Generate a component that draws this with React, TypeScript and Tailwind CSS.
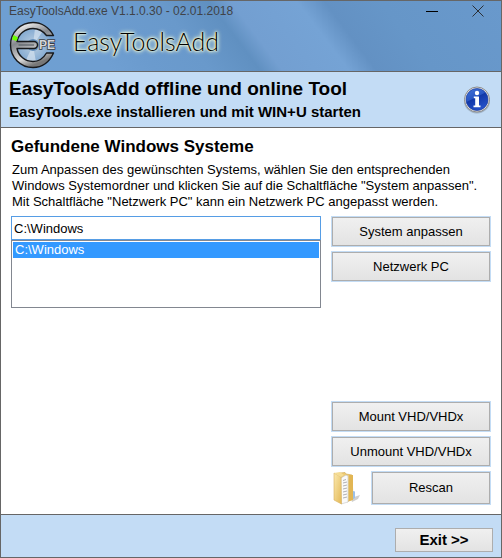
import React, { useState } from 'react';

const systems = ['C:\\Windows'];

const LogoIcon = () => (
  <svg className="h-[48px] w-[48px] shrink-0" viewBox="0 0 48 48" aria-hidden="true">
    <defs>
      <linearGradient id="metal" x1="0" y1="0" x2="0.4" y2="1">
        <stop offset="0" stopColor="#8d8d8d" />
        <stop offset="0.18" stopColor="#e2e2e2" />
        <stop offset="0.45" stopColor="#85888d" />
        <stop offset="0.8" stopColor="#dadada" />
        <stop offset="1" stopColor="#777" />
      </linearGradient>
      <radialGradient id="disc">
        <stop offset="0" stopColor="#6d9bc8" />
        <stop offset="0.3" stopColor="#a9c3dc" />
        <stop offset="1" stopColor="#7fa7d0" />
      </radialGradient>
    </defs>
    <circle cx="24" cy="24" r="18" fill="url(#disc)" />
    <path d="M24 24 L17 39 A17 17 0 0 0 27 41 Z M24 24 L26 7 A17 17 0 0 1 34 10 Z" fill="#d5e3ef" opacity="0.7" />
    <circle cx="24" cy="24" r="6" fill="#638fbd" />
    <path
      d="M44.500 14.500 C40 6 32 1.500 24 1.500 A22.500 22.500 0 0 0 24 46.500 C33 46.500 40 42 44.500 32 L37.500 32 C34 38 29 40.500 24 40.500 C16 40.500 9.500 35 8 27.500 L25 27.500 A3.500 3.500 0 0 0 25 20.500 L8 20.500 C9.500 13 16 7.500 24 7.500 C29 7.500 34 10 37.500 14.500 Z"
      fill="url(#metal)"
      stroke="#17191c"
      strokeWidth="1.400"
      strokeLinejoin="round"
    />
    <path d="M9.500 24 H25" stroke="#5a6067" strokeWidth="1.200" />
    <path d="M4.500 14 L9 16.500 L7.500 20 L3 18.500 Z" fill="#6cff00" />
    <text
      x="30"
      y="28"
      fontSize="12"
      fontWeight="700"
      fontFamily="Liberation Sans, sans-serif"
      fill="#d4d6d9"
      stroke="#383c42"
      strokeWidth="1.600"
      paintOrder="stroke"
    >
      PE
    </text>
  </svg>
);

const InfoIcon = () => (
  <svg className="h-[28px] w-[28px]" viewBox="0 0 28 28" aria-hidden="true">
    <defs>
      <linearGradient id="info" x1="0" y1="0" x2="0.5" y2="1">
        <stop offset="0" stopColor="#4474d8" />
        <stop offset="0.48" stopColor="#2856c4" />
        <stop offset="0.52" stopColor="#1238a8" />
        <stop offset="1" stopColor="#2450c8" />
      </linearGradient>
    </defs>
    <ellipse cx="14" cy="15" rx="13" ry="12.500" fill="#7c8796" opacity="0.5" />
    <circle cx="14" cy="13.500" r="12.500" fill="#e8e8e8" stroke="#8c8c8c" />
    <circle cx="14" cy="13.500" r="11" fill="url(#info)" stroke="#1d3f9d" strokeWidth="0.700" />
    <circle cx="14" cy="7" r="2.200" fill="#fff" />
    <path d="M10.800 10.500 H16 V19.500 H17.500 V21.300 H10.500 V19.500 H12.200 V12.300 H10.800 Z" fill="#fff" />
  </svg>
);

const FolderIcon = () => (
  <svg className="h-[34px] w-[30px]" viewBox="0 0 30 34" aria-hidden="true">
    <defs>
      <linearGradient id="folder" x1="0" y1="0" x2="1" y2="1">
        <stop offset="0" stopColor="#fbe9ae" />
        <stop offset="1" stopColor="#e3b856" />
      </linearGradient>
    </defs>
    <path d="M19 27 L28 24 L26 28 L20 31 Z" fill="#c4c4c4" opacity="0.8" />
    <path d="M8 2 L13 1.500 L14 3 L20 4 L21 28 L15 31 Z" fill="#edca72" stroke="#cfa549" strokeWidth="0.600" />
    <path d="M17 4 L21 4 V29 L17 30 Z" fill="#e2b654" />
    <path d="M21 20 L23 20.500 V27 L21 28 Z" fill="#9cc0e6" />
    <path d="M9 7 L14 4 L16 5 V31 L9 33 Z" fill="#fafafa" stroke="#c4c4c4" strokeWidth="0.600" />
    <path d="M11 9.500 L14 8.500 M11 12 L15 11 M11 15 L15 14 M11 18 L15 17 M11 21 L15 20 M11 24 L15 23 M11 27 L15 26" stroke="#b0b0b5" />
    <path d="M2 2 L9 6 L9.500 33 L2 29 Z" fill="url(#folder)" stroke="#d8b05a" strokeWidth="0.600" />
    <path d="M2 2 L8 1 L12 4 L9 6 Z" fill="#f5dc93" />
  </svg>
);

interface ActionButtonProps {
  label: string;
  className?: string;
}

const ActionButton: React.FC<ActionButtonProps> = ({ label, className = 'h-[31px] w-full' }) => (
  <button
    type="button"
    className={`${className} border border-[#c3dcf5] bg-[#adadad] p-px text-[13px] hover:border-[#3399ff]`}
  >
    <span className="flex h-full items-center justify-center bg-linear-to-b from-[#f0f0f0] to-[#e3e3e3]">{label}</span>
  </button>
);

export default function App() {
  const [selected, setSelected] = useState(systems[0]);

  return (
    <div className="flex min-h-screen flex-col border border-[#666] bg-white font-['Liberation_Sans',Arial,sans-serif] text-black">
      <header className="flex h-[71px] flex-col border-b border-[#666] bg-[linear-gradient(53deg,#6e9fd2_0%,#6f9fd2_20%,#6b9bce_28%,#6999cb_38%,#6090c1_47%,#739fd1_51%,#75a3d5_63%,#6391c3_68%,#6696c8_78%,#6999cc_100%)]">
        <div className="flex h-[20px] items-center justify-between pl-2">
          <span className="text-[12px] text-[#404348]">EasyToolsAdd.exe V1.1.0.30 - 02.01.2018</span>
          <div className="flex">
            <button type="button" aria-label="Minimieren" className="flex h-[20px] w-[46px] items-center justify-center">
              <svg className="h-3 w-3" viewBox="0 0 12 12">
                <path d="M0 6.500 H12" stroke="#000" />
              </svg>
            </button>
            <button type="button" aria-label="Schließen" className="flex h-[20px] w-[46px] items-center justify-center">
              <svg className="h-3 w-3" viewBox="0 0 12 12">
                <path d="M0.500 0.500 L11.500 11.500 M11.500 0.500 L0.500 11.500" stroke="#2b2f35" />
              </svg>
            </button>
          </div>
        </div>
        <div className="flex items-start gap-4 pl-2">
          <LogoIcon />
          <span className="font-['Lato'] text-[25px] leading-[40px] font-light [text-shadow:0_0_1px_#f4fbd8,0_0_2px_#f4fbd8,0_0_3px_#f4fbd8,0_0_4px_#f4fbd8,0_0_5px_#e6f2d0]">
            EasyToolsAdd
          </span>
        </div>
      </header>

      <section className="flex items-center justify-between border-b border-[#666] bg-[#c3dcf5] py-[5px] pr-[10px] pl-2">
        <div className="font-bold">
          <h1 className="text-[19px] leading-[24px]">EasyToolsAdd offline und online Tool</h1>
          <p className="text-[15px] leading-[21px]">EasyTools.exe installieren und mit WIN+U starten</p>
        </div>
        <button type="button" aria-label="Info">
          <InfoIcon />
        </button>
      </section>

      <main className="flex flex-1 flex-col px-[10px] pt-2">
        <h2 className="text-[17px] leading-[22px] font-bold">Gefundene Windows Systeme</h2>
        <p className="mt-1 pl-px text-[13px] leading-[16px]">
          Zum Anpassen des gewünschten Systems, wählen Sie den entsprechenden
          <br />
          Windows Systemordner und klicken Sie auf die Schaltfläche "System anpassen".
          <br />
          Mit Schaltfläche "Netzwerk PC" kann ein Netzwerk PC angepasst werden.
        </p>

        <div className="mt-[6px] flex flex-1 gap-[10px]">
          <div className="flex-1 text-[13px]">
            <input
              type="text"
              aria-label="Windows Systemordner"
              value={selected}
              onChange={(e) => setSelected(e.target.value)}
              className="block h-[24px] w-full border border-[#569de5] px-[2px] outline-none"
            />
            <ul aria-label="Gefundene Systeme" className="h-[68px] border border-[#828790] p-px">
              {systems.map((system) => (
                <li key={system}>
                  <button
                    type="button"
                    onClick={() => setSelected(system)}
                    className="block h-[16px] w-full bg-[#3399ff] px-[2px] text-left leading-[16px] text-white"
                  >
                    {system}
                  </button>
                </li>
              ))}
            </ul>
          </div>

          <div className="flex w-[160px] flex-col justify-between pb-[9px]">
            <div className="flex flex-col gap-1">
              <ActionButton label="System anpassen" />
              <ActionButton label="Netzwerk PC" />
            </div>
            <div className="flex flex-col gap-1">
              <ActionButton label="Mount VHD/VHDx" />
              <ActionButton label="Unmount VHD/VHDx" />
              <div className="flex items-center justify-between">
                <button type="button" aria-label="Ordner öffnen" className="pl-px">
                  <FolderIcon />
                </button>
                <ActionButton label="Rescan" className="h-[34px] w-[120px]" />
              </div>
            </div>
          </div>
        </div>
      </main>

      <footer className="flex h-[43px] items-center justify-end border-t border-[#666] bg-[#c3dcf5] pt-2 pr-2">
        <button
          type="button"
          className="h-[24px] w-[98px] border border-[#adadad] bg-linear-to-b from-[#f0f0f0] to-[#e3e3e3] text-[15px] leading-[22px] font-bold"
        >
          Exit &gt;&gt;
        </button>
      </footer>
    </div>
  );
}
